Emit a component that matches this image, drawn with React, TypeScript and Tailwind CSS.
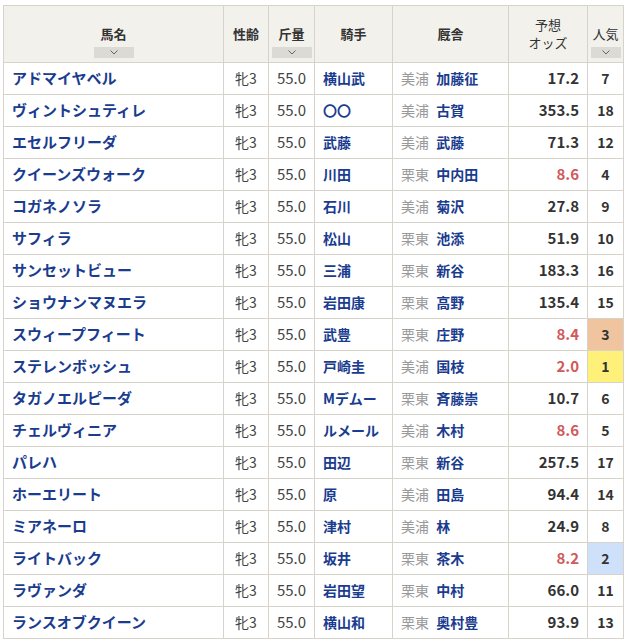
const rows: [string, string, string, string, string, string, number][] = [
  ['アドマイヤベル', '横山武', '美浦', '加藤征', '17.2', '', 7],
  ['ヴィントシュティレ', '〇〇', '美浦', '古賀', '353.5', '', 18],
  ['エセルフリーダ', '武藤', '美浦', '武藤', '71.3', '', 12],
  ['クイーンズウォーク', '川田', '栗東', '中内田', '8.6', 'r', 4],
  ['コガネノソラ', '石川', '美浦', '菊沢', '27.8', '', 9],
  ['サフィラ', '松山', '栗東', '池添', '51.9', '', 10],
  ['サンセットビュー', '三浦', '栗東', '新谷', '183.3', '', 16],
  ['ショウナンマヌエラ', '岩田康', '栗東', '高野', '135.4', '', 15],
  ['スウィープフィート', '武豊', '栗東', '庄野', '8.4', 'r', 3],
  ['ステレンボッシュ', '戸崎圭', '美浦', '国枝', '2.0', 'r', 1],
  ['タガノエルピーダ', 'Mデムー', '栗東', '斉藤崇', '10.7', '', 6],
  ['チェルヴィニア', 'ルメール', '美浦', '木村', '8.6', 'r', 5],
  ['パレハ', '田辺', '栗東', '新谷', '257.5', '', 17],
  ['ホーエリート', '原', '美浦', '田島', '94.4', '', 14],
  ['ミアネーロ', '津村', '美浦', '林', '24.9', '', 8],
  ['ライトバック', '坂井', '栗東', '茶木', '8.2', 'r', 2],
  ['ラヴァンダ', '岩田望', '栗東', '中村', '66.0', '', 11],
  ['ランスオブクイーン', '横山和', '栗東', '奥村豊', '93.9', '', 13],
]

const popBg: Record<number, string> = { 1: 'bg-[#fff07a]', 2: 'bg-[#cfe0fb]', 3: 'bg-[#efc49f]' }

function Sort({ w }: { w: string }) {
  return (
    <div className={'mx-auto mt-[3px] h-[11px] bg-[#dcdad4] flex items-center justify-center ' + w}>
      <svg width="8" height="5" viewBox="0 0 8 5"><path d="M0.5 0.5L4 4L7.5 0.5" stroke="#666" fill="none" /></svg>
    </div>
  )
}

export default function App() {
  const th = 'border border-[#d6d3cb] bg-[#f3f1ec] font-bold text-[#333] text-[13px] text-center'
  const td = 'border border-[#d6d3cb] h-[32px] text-[14px]'
  return (
    <div className="bg-white w-[626px] h-[642px] pl-[3px] pt-[5px]" style={{ fontFamily: '"Noto Sans CJK JP", "Noto Sans", sans-serif' }}>
      <table className="border-collapse table-fixed w-[620px]">
        <colgroup>
          <col className="w-[220px]" /><col className="w-[45px]" /><col className="w-[46px]" /><col className="w-[78px]" />
          <col className="w-[116px]" /><col className="w-[79px]" /><col className="w-[36px]" />
        </colgroup>
        <thead>
          <tr className="h-[57px]">
            <th className={th}><div className="pt-[14px]">馬名</div><Sort w="w-[40px]" /></th>
            <th className={th}>性齢</th>
            <th className={th}><div className="pt-[14px]">斤量</div><Sort w="w-[40px]" /></th>
            <th className={th}>騎手</th>
            <th className={th}>厩舎</th>
            <th className={th + ' leading-[18px] font-normal'}>予想<br />オッズ</th>
            <th className={th + ' font-normal'}><div className="pt-[14px]">人気</div><Sort w="w-[30px]" /></th>
          </tr>
        </thead>
        <tbody>
          {rows.map(([name, jockey, area, trainer, odds, red, pop]) => (
            <tr key={name}>
              <td className={td + ' pl-2 font-bold text-[15px] text-[#1a3c8f]'}>{name}</td>
              <td className={td + ' text-center text-[#444]'}>牝3</td>
              <td className={td + ' text-center text-[#444] text-[15px]'}>55.0</td>
              <td className={td + ' pl-2 font-bold text-[13px] text-[#1a3c8f]'}>{jockey}</td>
              <td className={td + ' pl-2 text-[13px]'}><span className="text-[#999]">{area}</span> <span className="ml-1 font-bold text-[#1a3c8f]">{trainer}</span></td>
              <td className={td + ' text-right pr-2 font-bold text-[15px] ' + (red ? 'text-[#d05a5a]' : 'text-[#333]')}>{odds}</td>
              <td className={td + ' text-center font-bold text-[#333] ' + (popBg[pop] ?? '')}>{pop}</td>
            </tr>
          ))}
        </tbody>
      </table>
    </div>
  )
}
